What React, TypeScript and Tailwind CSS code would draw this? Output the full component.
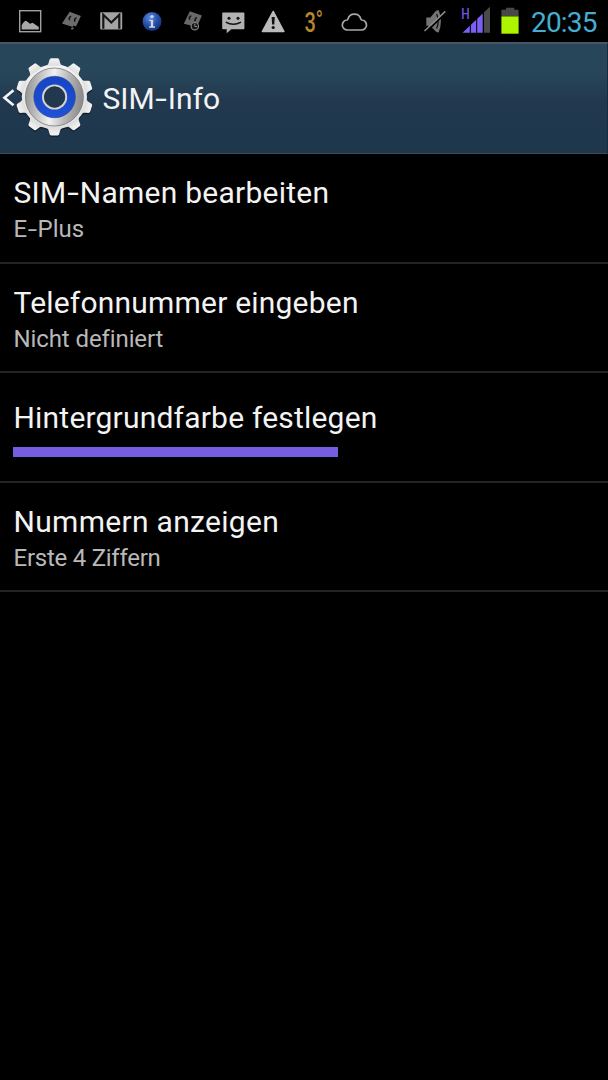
import React from "react";

const GEAR_TEETH = [0, 36, 72, 108, 144, 180, 216, 252, 288, 324];

const rows = [
  {
    title: "SIM-Namen bearbeiten",
    titleClass: "tracking-[0.25px]",
    summary: "E-Plus",
    summaryClass: "tracking-normal",
  },
  {
    title: "Telefonnummer eingeben",
    titleClass: "tracking-[0.2px]",
    summary: "Nicht definiert",
    summaryClass: "tracking-[-0.1px]",
  },
  {
    title: "Hintergrundfarbe festlegen",
    titleClass: "tracking-[0.2px]",
    color: true,
  },
  {
    title: "Nummern anzeigen",
    titleClass: "tracking-[0.3px]",
    summary: "Erste 4 Ziffern",
    summaryClass: "tracking-[-0.25px]",
  },
];

// Roboto's hyphen is a bit short for these labels, so widen it
function Label({ text = "" }: { text?: string }) {
  const parts = text.split("-");
  return (
    <>
      {parts.map((part, i) => (
        <React.Fragment key={i}>
          {i > 0 && <span className="inline-block scale-x-140 mx-[0.08em]">-</span>}
          {part}
        </React.Fragment>
      ))}
    </>
  );
}

function StatusIcon({ children }: { children: React.ReactNode }) {
  return (
    <svg className="w-[40.5px] h-[42px] shrink-0" viewBox="0 0 40.5 42">
      {children}
    </svg>
  );
}

function Notifications() {
  return (
    <div className="flex pl-[10.25px]">
      <StatusIcon>
        <rect x="9.7" y="10.7" width="21" height="21" fill="none" stroke="#a0a0a0" strokeWidth="1.4" />
        <path d="M11.7 29.5V25.2Q14 21 16.2 20.8l3.8 3 2.5-1 2 1.2 4.3 3v2.5z" fill="#a8a8a8" />
      </StatusIcon>
      <StatusIcon>
        <path d="M18.7 11.8 29.9 16 25 26.4 22.5 25.6l-.8 1.4-10.7-3.4z" fill="#6c6c6c" />
        <path d="m20 27.9 2.2-.7.6 1.5-2.2 1.3z" fill="#6c6c6c" />
        <path d="M20.2 16.5c-2 .2-2.6 2.5-1.5 3.6M25.6 18c-2 .2-2.6 2.5-1.5 3.6" fill="none" stroke="#151515" strokeWidth="1.6" />
      </StatusIcon>
      <StatusIcon>
        <rect x="9.2" y="12.2" width="22" height="17.2" rx="0.8" fill="#a4a4a4" />
        <path d="M12.3 28.8V14.8l8 7.7 8-7.7v14" fill="none" stroke="#161616" strokeWidth="2.2" />
      </StatusIcon>
      <StatusIcon>
        <defs>
          <radialGradient id="info" cx="0.4" cy="0.3" r="0.75">
            <stop offset="0" stopColor="#5c8de0" />
            <stop offset="0.55" stopColor="#254ea8" />
            <stop offset="1" stopColor="#122f78" />
          </radialGradient>
        </defs>
        <circle cx="20" cy="21.5" r="9.5" fill="url(#info)" />
        <circle cx="20" cy="16.6" r="1.7" fill="#cfd5e0" />
        <path d="M17.2 19.7h4v6.6h1.8v1.4h-5.8v-1.4h1.6V21h-1.6z" fill="#cfd5e0" />
      </StatusIcon>
      <StatusIcon>
        <path d="M17.8 11.3 29.9 15.5 25 27 11.8 23.8z" fill="#686868" />
        <path d="M19.4 16c-2 .2-2.6 2.5-1.5 3.6M25 17.7c-2 .2-2.6 2.5-1.5 3.6" fill="none" stroke="#151515" strokeWidth="1.6" />
        <circle cx="22.8" cy="26.2" r="3.7" fill="#171717" stroke="#858585" strokeWidth="1.2" />
        <path d="M22.8 23.7v2.8h2.2" fill="none" stroke="#858585" strokeWidth="1" />
      </StatusIcon>
      <StatusIcon>
        <path d="M10 12.5h20.6q.8 0 .8.8v15.2q0 .8-.8.8H18.3L13.7 33.2V29.3H10q-.8 0-.8-.8V13.3q0-.8.8-.8z" fill="#b2b2b2" />
        <circle cx="16" cy="18.3" r="1.5" fill="#111" />
        <circle cx="25" cy="18.3" r="1.5" fill="#111" />
        <path d="M12.8 22.2q7.5 4.3 15.2 0" fill="none" stroke="#111" strokeWidth="1.5" />
      </StatusIcon>
      <StatusIcon>
        <path d="M20.2 11.4 31 31.5H9.3z" fill="#bbb" stroke="#bbb" strokeWidth="1.4" strokeLinejoin="round" />
        <path d="M18.6 17h3.2l-.5 7.5h-2.2z" fill="#111" />
        <circle cx="20.2" cy="27.5" r="1.6" fill="#111" />
      </StatusIcon>
      <StatusIcon>
        <text
          transform="translate(10.4 32) scale(0.74 1)"
          fontSize="27"
          fontWeight="500"
          fontFamily="Roboto, sans-serif"
          fill="#b5862c"
        >
          3
        </text>
        <text
          transform="translate(21.6 29.6) scale(0.75 1)"
          fontSize="27"
          fontFamily="Roboto, sans-serif"
          fill="#b5862c"
        >
          °
        </text>
      </StatusIcon>
      <StatusIcon>
        <path
          d="M13.5 30.2a5 5 0 0 1-.4-10 1 1 0 0 0 .8-.8 6.7 6.7 0 0 1 13 0 1 1 0 0 0 .8.8 5 5 0 0 1-.4 10z"
          fill="none"
          stroke="#a8a8a8"
          strokeWidth="1.7"
          transform="translate(0 -0.2)"
        />
      </StatusIcon>
    </div>
  );
}

function SystemStatus() {
  return (
    <div className="flex">
      <svg className="w-10 h-[42px]" viewBox="420 0 40 42">
        <path d="M426.3 17.5h4l5.2-6.2q1.6-1.4 3.2-1 2.2 5 2.2 11t-2.2 11q-1.6.4-3.2-1l-5.2-5.5h-4z" fill="#747474" />
        <path d="M436.6 14q1.6 3.5 1.6 7.3t-1.6 7.3" fill="none" stroke="#111" strokeWidth="1.3" />
        <path d="M425.6 32.4 446 12.6" stroke="#000" strokeWidth="2" />
        <path d="M424.5 31 445.3 11.4" stroke="#8d8d8d" strokeWidth="1.5" />
      </svg>
      <svg className="w-10 h-[42px]" viewBox="460 0 40 42">
        <text
          transform="translate(461.2 18.8) scale(0.82 1)"
          fontSize="14.5"
          fontWeight="500"
          fontFamily="Roboto, sans-serif"
          fill="#7159e0"
        >
          H
        </text>
        <path d="M462.5 32.8 469.8 25.8v7zM470.9 24.8l5.3-5v13h-5.3zM477.2 18.8l5.5-5.3v19.3h-5.5z" fill="#7a5ff2" />
        <path d="m484 12.2 6-5.4v26h-6z" fill="#4a4a4a" />
      </svg>
      <svg className="w-[31px] h-[42px]" viewBox="500 0 31 42">
        <path d="M506 7.7h8.3v2h4.3v7h-17.2v-7h4.6z" fill="#484848" />
        <rect x="501.4" y="16.5" width="17.2" height="17.2" fill="#aef500" />
      </svg>
      <span className="w-[77px] text-[28px] leading-[45px] tracking-[-0.8px] text-[#45add2] whitespace-nowrap">
        20:35
      </span>
    </div>
  );
}

function SettingsGear() {
  return (
    <svg className="w-[100px] h-[109px] shrink-0" viewBox="0 44 100 109">
      <defs>
        <linearGradient id="rim" x1="0" y1="0" x2="0" y2="1">
          <stop offset="0" stopColor="#f4f4f4" />
          <stop offset="1" stopColor="#dedede" />
        </linearGradient>
        <linearGradient id="steel" x1="0" y1="0" x2="1" y2="0.1">
          <stop offset="0" stopColor="#8c8c8c" />
          <stop offset="0.3" stopColor="#c8c8c8" />
          <stop offset="0.5" stopColor="#f2f2f2" />
          <stop offset="0.75" stopColor="#b8b8b8" />
          <stop offset="1" stopColor="#8e8e8e" />
        </linearGradient>
        <linearGradient id="blue" x1="0" y1="0" x2="0" y2="1">
          <stop offset="0" stopColor="#1646c4" />
          <stop offset="1" stopColor="#2050d4" />
        </linearGradient>
        <g id="cog">
          <circle r="32.6" />
          {GEAR_TEETH.map((angle) => (
            <path
              key={angle}
              d="M-8-31C-6.2-32-5.8-33.5-4.9-37Q-4.5-38.6-3.2-38.6H3.2Q4.5-38.6 4.9-37C5.8-33.5 6.2-32 8-31z"
              transform={`rotate(${angle})`}
            />
          ))}
        </g>
      </defs>
      <path d="M13.5 90.3 4.5 97.7l9 7.5" fill="none" stroke="#f2f5f7" strokeWidth="2.7" />
      <use href="#cog" transform="translate(54.4 98.4)" fill="#101c28" opacity="0.75" />
      <use href="#cog" transform="translate(54.4 96.8)" fill="url(#rim)" />
      <circle cx="54.4" cy="97" r="29" fill="url(#steel)" stroke="#777" strokeWidth="0.8" />
      <circle cx="54.6" cy="97" r="20.8" fill="url(#blue)" stroke="#28439a" strokeWidth="0.6" />
      <circle cx="54.6" cy="97" r="11.5" fill="#22384f" stroke="#d2d2d2" strokeWidth="2.2" />
      <circle cx="54.6" cy="97" r="10.2" fill="none" stroke="#263038" strokeWidth="0.8" />
    </svg>
  );
}

export default function App() {
  return (
    <div className="w-[608px] h-[1080px] bg-black text-[#f3f3f3] font-[Roboto,sans-serif] overflow-hidden">
      <div className="flex justify-between h-[42px]">
        <Notifications />
        <SystemStatus />
      </div>

      <header className="flex items-center h-[112px] border-t-2 border-t-[#465665] border-b border-b-[#3c4b55] border-r border-r-[#1a2c3c] bg-linear-to-b from-[#28465a] from-25% via-[#21384f] via-55% to-[#1e374d]">
        <SettingsGear />
        <h1 className="pl-[2.5px] pt-px text-[30px] leading-9 whitespace-nowrap">
          <Label text="SIM-Info" />
        </h1>
      </header>

      <ul>
        {rows.map((row) => (
          <li
            key={row.title}
            className="flex flex-col justify-center h-[109.5px] border-b-2 border-[#232323] pt-[7px] pl-[13.5px] whitespace-nowrap"
          >
            <p className={`text-[30px] leading-9 ${row.titleClass}`}>
              <Label text={row.title} />
            </p>
            {row.color ? (
              <div className="w-[325px] h-[10px] mt-[11px] mb-[3px] -ml-[0.5px] bg-[#765ce0]" />
            ) : (
              <p className={`text-[24px] leading-9 text-[#b8b8b8] ${row.summaryClass}`}>
                <Label text={row.summary} />
              </p>
            )}
          </li>
        ))}
      </ul>
    </div>
  );
}
